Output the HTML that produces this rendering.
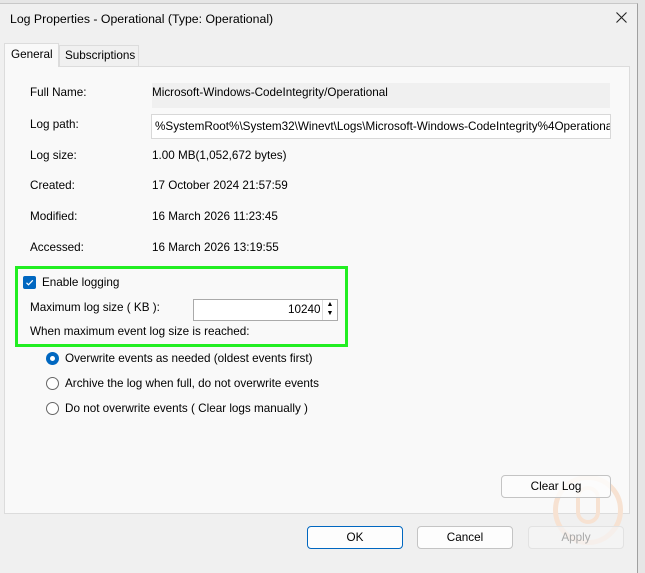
<!DOCTYPE html>
<html><head><style>
*{box-sizing:border-box;margin:0;padding:0}
body{width:645px;height:573px;background:#e6e6e6;font-family:"Liberation Sans",sans-serif;font-size:11.7px;color:#000;position:relative;overflow:hidden}
.a{position:absolute;white-space:nowrap}
#win{position:absolute;left:0;top:3px;width:638px;height:570px;background:#f0f0f0;border-right:1px solid #a0a0a0;border-top:1px solid #c8c8c8}
#panel{position:absolute;left:4px;top:66px;width:626px;height:448px;background:#f9f9f9;border:1px solid #dcdcdc}
.btn{position:absolute;height:23px;background:#fdfdfd;border:1px solid #c4c4c4;border-radius:4px;text-align:center;line-height:21px}
</style></head><body>
<div id="win"></div>
<div class="a" style="left:10px;top:12px;font-size:12.3px">Log Properties - Operational (Type: Operational)</div>
<svg class="a" style="left:616px;top:12px" width="11" height="11"><path d="M0.5 0.5L10.5 10.5M10.5 0.5L0.5 10.5" stroke="#222" stroke-width="1.1"/></svg>
<div id="panel"></div>
<div class="a" style="left:4px;top:43px;width:55px;height:24px;background:#f9f9f9;border:1px solid #dcdcdc;border-bottom:none;padding:4px 0 0 6px">General</div>
<div class="a" style="left:59px;top:45px;width:80px;height:21px;border:1px solid #dcdcdc;border-bottom:none;padding:3px 0 0 5px">Subscriptions</div>
<div class="a" style="left:30px;top:86px">Full Name:</div>
<div class="a" style="left:152px;top:83px;width:458px;height:25px;background:#f0f0f0"></div>
<div class="a" style="left:152px;top:86px">Microsoft-Windows-CodeIntegrity/Operational</div>
<div class="a" style="left:30px;top:118px">Log path:</div>
<div class="a" style="left:151px;top:114px;width:460px;height:25px;background:#fff;border:1px solid #d8d8d8;overflow:hidden;padding:5px 0 0 3px">%SystemRoot%\System32\Winevt\Logs\Microsoft-Windows-CodeIntegrity%4Operational.evtx</div>
<div class="a" style="left:30px;top:149px">Log size:</div><div class="a" style="left:152px;top:149px">1.00 MB(1,052,672 bytes)</div>
<div class="a" style="left:30px;top:179px">Created:</div><div class="a" style="left:152px;top:179px">17 October 2024 21:57:59</div>
<div class="a" style="left:30px;top:210px">Modified:</div><div class="a" style="left:152px;top:210px">16 March 2026 11:23:45</div>
<div class="a" style="left:30px;top:241px">Accessed:</div><div class="a" style="left:152px;top:241px">16 March 2026 13:19:55</div>
<div class="a" style="left:15px;top:266px;width:333px;height:81px;border:3px solid #22ee22"></div>
<div class="a" style="left:23px;top:276px;width:13px;height:13px;background:#0067c0;border-radius:2px"></div>
<svg class="a" style="left:23px;top:276px" width="13" height="13"><path d="M3.5 6.8L5.5 8.8L9.8 4.3" stroke="#fff" stroke-width="1.2" fill="none"/></svg>
<div class="a" style="left:42px;top:276px">Enable logging</div>
<div class="a" style="left:30px;top:301px">Maximum log size ( KB ):</div>
<div class="a" style="left:193px;top:299px;width:145px;height:22px;background:#fff;border:1px solid #aaa"></div>
<div class="a" style="left:288px;top:303px">10240</div>
<div class="a" style="left:322px;top:300px;width:15px;height:20px;border-left:1px solid #ddd;font-size:7px;line-height:9px;text-align:center">▲<br>▼</div>
<div class="a" style="left:30px;top:325px">When maximum event log size is reached:</div>
<div class="a" style="left:46px;top:352px;width:13px;height:13px;border-radius:50%;background:#0067c0"></div>
<div class="a" style="left:50px;top:356px;width:5px;height:5px;border-radius:50%;background:#fff"></div>
<div class="a" style="left:65px;top:352px">Overwrite events as needed (oldest events first)</div>
<div class="a" style="left:46px;top:377px;width:13px;height:13px;border-radius:50%;border:1px solid #666;background:#fff"></div>
<div class="a" style="left:65px;top:377px">Archive the log when full, do not overwrite events</div>
<div class="a" style="left:46px;top:402px;width:13px;height:13px;border-radius:50%;border:1px solid #666;background:#fff"></div>
<div class="a" style="left:65px;top:402px">Do not overwrite events ( Clear logs manually )</div>
<div class="a" style="left:553px;top:475px;width:70px;height:70px;border-radius:50%;border:5px solid #f7e2d2"></div>
<div class="a" style="left:576px;top:486px;width:24px;height:38px;border-radius:12px;border:4px solid #f7e2d2"></div>
<div class="btn" style="left:501px;top:475px;width:110px;background:rgba(253,253,253,.85)">Clear Log</div>
<div class="btn" style="left:307px;top:526px;width:96px;border-color:#0067c0">OK</div>
<div class="btn" style="left:417px;top:526px;width:96px">Cancel</div>
<div class="btn" style="left:528px;top:526px;width:96px;background:rgba(245,245,245,.7);border-color:#e2e2e2;color:#a8a8a8">Apply</div>
</body></html>
